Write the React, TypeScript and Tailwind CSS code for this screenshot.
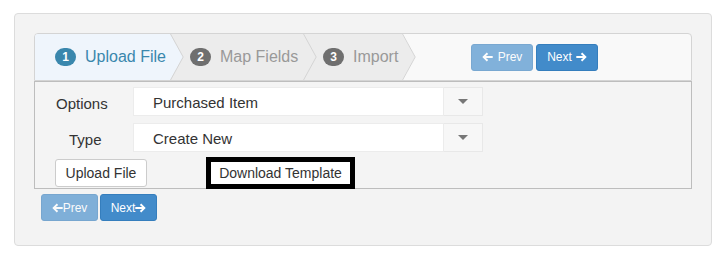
import type { ReactNode } from 'react';

const font = { fontFamily: '"Liberation Sans", Arial, sans-serif' };

function ArrowLeft() {
  return (
    <svg width="11" height="10" viewBox="0 0 11 10" aria-hidden>
      <path d="M0.3 5 L4.8 0.5 L6.2 1.9 L3.9 4.1 H10.7 V5.9 H3.9 L6.2 8.1 L4.8 9.5 Z" fill="currentColor" />
    </svg>
  );
}

function ArrowRight() {
  return (
    <svg width="11" height="10" viewBox="0 0 11 10" aria-hidden>
      <path d="M10.7 5 L6.2 0.5 L4.8 1.9 L7.1 4.1 H0.3 V5.9 H7.1 L4.8 8.1 L6.2 9.5 Z" fill="currentColor" />
    </svg>
  );
}

function Caret() {
  return (
    <svg width="10" height="5" viewBox="0 0 10 5" aria-hidden>
      <path d="M0 0 H10 L5 5 Z" fill="#777" />
    </svg>
  );
}

type StepProps = {
  n: number;
  label: string;
  active?: boolean;
  className: string;
  rounded?: boolean;
};

function Step({ n, label, active, className, rounded }: StepProps) {
  const fill = active ? '#eff5fc' : '#ececec';
  return (
    <div
      className={`relative flex h-full shrink-0 items-center whitespace-nowrap pl-[20px] ${className} ${
        active ? 'bg-[#eff5fc] text-[#3a87ad]' : 'bg-[#ececec] text-[#999]'
      } ${rounded ? 'rounded-tl-[3px]' : ''}`}
    >
      <span
        className={`inline-flex h-[18px] min-w-[21px] items-center justify-center rounded-full px-[7px] text-[12px] font-bold leading-none text-white ${
          active ? 'bg-[#3a87ad]' : 'bg-[#6f6f6f]'
        }`}
      >
        {n}
      </span>
      <span className="ml-[9px] text-[16px] leading-none">{label}</span>
      <svg
        className="absolute left-full top-0"
        width="14"
        height="46"
        viewBox="0 0 14 46"
        aria-hidden
      >
        <path d="M0 0 L13 23 L0 46 Z" fill={fill} />
        <path d="M0 -1 L13.2 23 L0 47" fill="none" stroke="#d4d4d4" strokeWidth="1" />
      </svg>
    </div>
  );
}

function NavButton({
  children,
  disabled,
  className,
}: {
  children: ReactNode;
  disabled?: boolean;
  className?: string;
}) {
  return (
    <button
      type="button"
      className={`flex h-[27px] items-center justify-center rounded-[3px] border border-[#357ebd] bg-[#428bca] text-[12px] leading-none text-white ${
        disabled ? 'opacity-65' : ''
      } ${className ?? ''}`}
    >
      {children}
    </button>
  );
}

function SelectRow({ label, value, labelPad }: { label: string; value: string; labelPad: string }) {
  return (
    <div className="flex h-[29px] items-start">
      <div className={`w-[98px] pt-[8px] text-[15px] leading-[17px] text-[#333] ${labelPad}`}>
        {label}
      </div>
      <div className="flex h-[29px]">
        <div className="h-full w-[311px] border border-[#ececec] bg-white pl-[19px] pt-[6px] text-[15px] leading-[17px] text-[#333]">
          {value}
        </div>
        <div className="flex h-full w-[39px] items-center justify-center border border-l-0 border-[#e8e8e8] bg-[#f7f7f7]">
          <Caret />
        </div>
      </div>
    </div>
  );
}

export default function App() {
  return (
    <div className="bg-white pt-[13px]" style={font}>
      <div className="ml-[14px] w-[698px] rounded-[4px] border border-[#dcdcdc] bg-[#f3f3f3] p-[19px] pb-[24px]">
        {/* wizard steps */}
        <div className="flex h-[48px] items-stretch rounded-t-[4px] border border-[#d4d4d4] bg-[#f9f9f9]">
          <Step n={1} label="Upload File" active className="z-30 w-[135px]" rounded />
          <Step n={2} label="Map Fields" className="z-20 w-[133px]" />
          <Step n={3} label="Import" className="z-10 w-[99px] pl-[19px]" />
          <div className="ml-[69px] flex items-center gap-[3px]">
            <NavButton disabled className="w-[62px] gap-[5px]">
              <ArrowLeft />
              <span>Prev</span>
            </NavButton>
            <NavButton className="w-[62px] gap-[4px]">
              <span>Next</span>
              <ArrowRight />
            </NavButton>
          </div>
        </div>

        {/* step content */}
        <div className="flex h-[108px] flex-col gap-[7px] border border-[#bdbdbd] bg-[#f4f4f4] pt-[5px]">
          <SelectRow label="Options" value="Purchased Item" labelPad="pl-[21px]" />
          <SelectRow label="Type" value="Create New" labelPad="pl-[34px]" />
          <div className="flex h-[28px] items-center">
            <button
              type="button"
              className="ml-[20px] h-[28px] w-[92px] rounded-[3px] border border-[#ccc] bg-white text-[14px] text-[#333]"
            >
              Upload File
            </button>
            <button
              type="button"
              className="ml-[59px] h-[32px] w-[149px] border-[5px] border-black bg-white text-[14px] text-[#333]"
            >
              Download Template
            </button>
          </div>
        </div>

        <div className="ml-[7px] mt-[5px] flex gap-[2px]">
          <NavButton disabled className="w-[57px]">
            <ArrowLeft />
            <span>Prev</span>
          </NavButton>
          <NavButton className="w-[57px]">
            <span>Next</span>
            <ArrowRight />
          </NavButton>
        </div>
      </div>
    </div>
  );
}
